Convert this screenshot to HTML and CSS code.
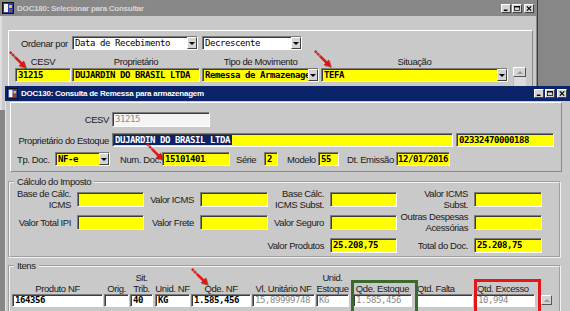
FILE: index.html
```html
<!DOCTYPE html>
<html lang="pt-BR">
  <head>
    <meta charset="UTF-8" />
    <title>DOC130: Consulta de Remessa para armazenagem</title>
    <link rel="stylesheet" href="styles.css">
  </head>
  <body>
    <!-- Janela de trás: DOC180 -->
    <div class="win win-back">
      <div class="titlebar inactive">
        <svg class="app-ico" width="12" height="12" viewBox="0 0 12 12"><rect x="0.5" y="0.5" width="11" height="11" fill="#2c3f9c" stroke="#111"/><rect x="2" y="2" width="4" height="8" fill="#f2f2f2"/><rect x="7" y="3" width="3" height="3" fill="#e8c020"/><rect x="7" y="7" width="3" height="3" fill="#d03030"/></svg>
        <span class="title">DOC180: Selecionar para Consultar</span>
        <div class="tb-btns">
          <span class="tb-btn"><svg width="8" height="7" viewBox="0 0 8 7"><rect x="1" y="5" width="5" height="2" fill="#000"/></svg></span>
          <span class="tb-btn"><svg width="8" height="7" viewBox="0 0 8 7"><rect x="0.5" y="0.5" width="7" height="6" fill="none" stroke="#000"/><rect x="0" y="0" width="8" height="2" fill="#000"/></svg></span>
          <span class="tb-btn close"><svg width="8" height="7" viewBox="0 0 8 7"><path d="M1 0.5 L7 6.5 M7 0.5 L1 6.5" stroke="#000" stroke-width="1.6"/></svg></span>
        </div>
      </div>

      <div class="panel back-panel">
        <div class="order-row">
          <span class="lbl order-lbl">Ordenar por</span>
          <div class="fld wht combo w126"><span class="val thin">Data de Recebimento</span><i class="drop"></i></div>
          <div class="fld wht combo w100 ml4"><span class="val thin">Decrescente</span><i class="drop"></i></div>
        </div>
        <div class="filter-row">
          <div class="fcol w56"><span class="hdr">CESV</span><div class="fld yel">31215</div></div>
          <div class="fcol w128 ml1"><span class="hdr">Proprietário</span><div class="fld yel">DUJARDIN DO BRASIL LTDA</div></div>
          <div class="fcol w117 ml2"><span class="hdr">Tipo de Movimento</span><div class="fld yel combo"><span class="val">Remessa de Armazenagem</span><i class="drop"></i></div></div>
          <div class="fcol w187 ml2"><span class="hdr">Situação</span><div class="fld yel combo"><span class="val">TEFA</span><i class="drop"></i></div></div>
          <div class="fcol scroll-col">
            <span class="sc-btn"><i class="up"></i></span>
            <span class="sc-track"></span>
          </div>
        </div>
      </div>
    </div>

    <!-- Janela da frente: DOC130 -->
    <div class="win win-front">
      <div class="titlebar active">
        <svg class="app-ico" width="11" height="11" viewBox="0 0 12 12"><rect x="0.5" y="0.5" width="11" height="11" fill="#2c3f9c" stroke="#111"/><rect x="2" y="2" width="4" height="8" fill="#f2f2f2"/><rect x="7" y="3" width="3" height="3" fill="#e8c020"/><rect x="7" y="7" width="3" height="3" fill="#d03030"/></svg>
        <span class="title">DOC130: Consulta de Remessa para armazenagem</span>
        <div class="tb-btns">
          <span class="tb-btn"><svg width="8" height="7" viewBox="0 0 8 7"><rect x="1" y="5" width="5" height="2" fill="#000"/></svg></span>
          <span class="tb-btn"><svg width="8" height="7" viewBox="0 0 8 7"><rect x="0.5" y="0.5" width="7" height="6" fill="none" stroke="#000"/><rect x="0" y="0" width="8" height="2" fill="#000"/></svg></span>
          <span class="tb-btn close"><svg width="8" height="7" viewBox="0 0 8 7"><path d="M1 0.5 L7 6.5 M7 0.5 L1 6.5" stroke="#000" stroke-width="1.6"/></svg></span>
        </div>
      </div>

      <div class="panel head-panel">
        <div class="hp-row r1">
          <span class="lbl rlbl">CESV</span>
          <div class="fld off w98 h15">31215</div>
        </div>
        <div class="hp-row r2">
          <span class="lbl rlbl">Proprietário do Estoque</span>
          <div class="fld yel w341"><span class="sel">DUJARDIN DO BRASIL LTDA</span></div>
          <div class="fld yel w98 ml3">02332470000188</div>
        </div>
        <div class="hp-row r3">
          <span class="lbl l-tp">Tp. Doc.</span>
          <div class="fld yel combo w55"><span class="val">NF-e</span><i class="drop"></i></div>
          <span class="lbl l-num">Num. Doc.</span>
          <div class="fld yel w68">15101401</div>
          <span class="lbl l-serie">Série</span>
          <div class="fld yel w14">2</div>
          <span class="lbl l-modelo">Modelo</span>
          <div class="fld yel w21">55</div>
          <span class="lbl l-dt">Dt. Emissão</span>
          <div class="fld yel w54 tight">12/01/2016</div>
        </div>
      </div>

      <fieldset class="group calc">
        <legend>Cálculo do Imposto</legend>
        <div class="calc-grid">
          <span class="lbl">Base de Cálc.<br>ICMS</span>
          <div class="fld yel"></div>
          <span class="lbl">Valor ICMS</span>
          <div class="fld yel"></div>
          <span class="lbl">Base Cálc.<br>ICMS Subst.</span>
          <div class="fld yel"></div>
          <span class="lbl">Valor ICMS<br>Subst.</span>
          <div class="fld yel"></div>

          <span class="lbl">Valor Total IPI</span>
          <div class="fld yel"></div>
          <span class="lbl">Valor Frete</span>
          <div class="fld yel"></div>
          <span class="lbl">Valor Seguro</span>
          <div class="fld yel"></div>
          <span class="lbl">Outras Despesas<br>Acessórias</span>
          <div class="fld yel"></div>

          <span class="lbl c45">Valor Produtos</span>
          <div class="fld yel">25.208,75</div>
          <span class="lbl">Total do Doc.</span>
          <div class="fld yel">25.208,75</div>
        </div>
      </fieldset>

      <fieldset class="group itens">
        <legend>Itens</legend>
        <div class="items">
          <div class="icol w91"><span class="hdr">Produto NF</span><div class="fld">164356</div></div>
          <div class="icol w25 ml1"><span class="hdr">Orig.</span><div class="fld"></div></div>
          <div class="icol w23 ml1"><span class="hdr">Sit.<br>Trib.</span><div class="fld">40</div></div>
          <div class="icol w35 ml2"><span class="hdr">Unid. NF</span><div class="fld">KG</div></div>
          <div class="icol w60 ml1"><span class="hdr">Qde. NF</span><div class="fld">1.585,456</div></div>
          <div class="icol w63 ml1"><span class="hdr">Vl. Unitário NF</span><div class="fld dim">15,89999748</div></div>
          <div class="icol w33 ml1"><span class="hdr">Unid.<br>Estoque</span><div class="fld dim">KG</div></div>
          <div class="icol w59 ml4"><span class="hdr">Qde. Estoque</span><div class="fld dim">1.585,456</div></div>
          <div class="icol w58 ml3"><span class="hdr left">Qtd. Falta</span><div class="fld"></div></div>
          <div class="icol w60 ml2"><span class="hdr left">Qtd. Excesso</span><div class="fld dim">10,994</div></div>
          <div class="icol sc-item"><span class="sc-btn"><i class="up"></i></span></div>
        </div>
      </fieldset>
    </div>

    <!-- Marcações da captura (sobrepostas) -->
    <div class="mark mark-green"></div>
    <div class="mark mark-red"></div>
    <svg class="arrow ar-cesv" width="18" height="18" viewBox="0 0 20 20"><path d="M1 1 L7 7" stroke="#e41414" stroke-width="2.6" stroke-dasharray="2.2 1.6"/><path d="M7 7 L14 14" stroke="#e41414" stroke-width="2.6"/><polygon points="19,19 10.6,16.6 16.6,10.6" fill="#e41414"/></svg>
    <svg class="arrow ar-tefa" width="18" height="18" viewBox="0 0 20 20"><path d="M1 1 L7 7" stroke="#e41414" stroke-width="2.6" stroke-dasharray="2.2 1.6"/><path d="M7 7 L14 14" stroke="#e41414" stroke-width="2.6"/><polygon points="19,19 10.6,16.6 16.6,10.6" fill="#e41414"/></svg>
    <svg class="arrow ar-num" width="18" height="18" viewBox="0 0 20 20"><path d="M1 1 L7 7" stroke="#e41414" stroke-width="2.6" stroke-dasharray="2.2 1.6"/><path d="M7 7 L14 14" stroke="#e41414" stroke-width="2.6"/><polygon points="19,19 10.6,16.6 16.6,10.6" fill="#e41414"/></svg>
    <svg class="arrow ar-qde" width="18" height="18" viewBox="0 0 20 20"><path d="M1 1 L7 7" stroke="#e41414" stroke-width="2.6" stroke-dasharray="2.2 1.6"/><path d="M7 7 L14 14" stroke="#e41414" stroke-width="2.6"/><polygon points="19,19 10.6,16.6 16.6,10.6" fill="#e41414"/></svg>
  </body>
</html>
```

FILE: styles.css
```css
* {
  margin: 0;
  box-sizing: border-box;
}

body {
  position: relative;
  width: 570px;
  height: 311px;
  overflow: hidden;
  background: #878787;
  font-family: "Liberation Sans", Arial, sans-serif;
  font-size: 9.5px;
  letter-spacing: -0.4px;
  color: #1a1a1a;
}

/* Windows on the desktop */
.win {
  position: absolute;
  background: #c9c9c9;
  overflow: hidden;
}

.win-back {
  left: 0;
  top: 0;
  width: 538px;
  height: 110px;
  border-right: 1px solid #3c3c3c;
  box-shadow: inset -1px 0 0 #8a8a8a, inset 2px 0 0 #dedede;
}

.win-front {
  left: 5px;
  top: 86px;
  width: 565px;
  height: 225px;
  box-shadow: inset 1px 0 0 #e6e6e6;
}

/* Title bars */
.titlebar {
  display: flex;
  align-items: center;
  gap: 3px;
  padding-left: 2px;
}

.titlebar.inactive {
  height: 16px;
  background: #888888;
  color: #d6d6d6;
  padding-right: 3px;
}

.titlebar.active {
  height: 15px;
  background: #0b2469;
  color: #fff;
  padding-right: 3px;
}

.title {
  font-size: 8px;
  font-weight: bold;
  letter-spacing: -0.25px;
}

.tb-btns {
  display: flex;
  gap: 1px;
  margin-left: auto;
}

.tb-btn {
  width: 10px;
  height: 9px;
  display: flex;
  align-items: center;
  justify-content: center;
  background: #d4d4d4;
  border: 1px solid;
  border-color: #fff #404040 #404040 #fff;
}

.tb-btn svg {
  width: 6px;
  height: 5px;
}

.tb-btn.close {
  margin-left: 1px;
}

/* Panels */
.panel {
  border-top: 1px solid #fff;
  border-left: 1px solid #fff;
}

.back-panel {
  margin: 14px 0 0 8px;
  width: 525px;
  height: 100px;
  border-right: 1px solid #8a8a8a;
}

.head-panel {
  margin: 1px 0 0 5px;
  width: 552px;
  height: 70px;
  border-right: 1px solid #8a8a8a;
  border-bottom: 1px solid #8a8a8a;
}

/* Fields */
.fld {
  height: 14px;
  border: 1px solid;
  border-color: #7c7c7c #fff #fff #7c7c7c;
  box-shadow: inset 1px 1px 0 #3c3c3c;
  padding: 0 0 0 2px;
  font-family: "DejaVu Sans Mono", "Liberation Mono", monospace;
  font-weight: bold;
  font-size: 9px;
  letter-spacing: -0.42px;
  line-height: 12px;
  color: #000;
  white-space: nowrap;
  overflow: hidden;
}

.fld.tight { padding-left: 1px; }

.yel { background: #ffff00; }
.wht { background: #fff; }

.off {
  background: #f4f4f4;
  color: #8a8a8a;
  font-weight: normal;
}

.thin { font-weight: normal; }

.dim {
  color: #8a8a8a;
  font-weight: normal;
}

.combo {
  display: flex;
  padding-right: 0;
}

.combo .val {
  flex: 1;
  overflow: hidden;
}

.drop {
  flex: none;
  width: 10px;
  height: 12px;
  background: #d4d4d4;
  border: 1px solid;
  border-color: #fff #404040 #404040 #fff;
  display: flex;
  align-items: center;
  justify-content: center;
}

.drop::after {
  content: "";
  border-left: 3px solid transparent;
  border-right: 3px solid transparent;
  border-top: 3px solid #000;
}

.sel {
  background: #0b2469;
  color: #fff;
  padding: 0 2px 0 1px;
  margin-left: -1px;
}

/* Back window rows */
.order-row {
  display: flex;
  align-items: center;
  margin-top: 5px;
  padding-left: 12px;
}

.order-lbl { width: 51px; }

.filter-row {
  display: flex;
  margin-top: 6px;
  padding-left: 6px;
}

.fcol {
  display: flex;
  flex-direction: column;
}

.fcol .hdr {
  height: 12px;
  line-height: 12px;
  text-align: center;
}

.scroll-col {
  margin-left: 5px;
  width: 13px;
  padding-top: 11px;
}

.sc-btn {
  width: 13px;
  height: 10px;
  display: flex;
  align-items: center;
  justify-content: center;
  background: #d4d4d4;
  border: 1px solid;
  border-color: #fff #555 #555 #fff;
}

.sc-btn .up {
  border-left: 3px solid transparent;
  border-right: 3px solid transparent;
  border-bottom: 3px solid #9a9a9a;
}

.sc-track {
  height: 10px;
  background: #dcdcdc;
  border-left: 1px solid #bdbdbd;
}

/* Front window header rows */
.hp-row {
  display: flex;
  align-items: center;
}

.r1 { margin-top: 9px; }
.r2 { margin-top: 6px; }
.r3 { margin-top: 5px; padding-left: 6px; }

.rlbl {
  width: 101px;
  text-align: right;
  padding-right: 3px;
}

.h15 { height: 15px; line-height: 13px; }

.l-tp { width: 38px; }
.l-num { width: 42px; margin-left: 10px; }
.l-serie { width: 28px; margin-left: 6px; }
.l-modelo { width: 31px; margin-left: 9px; }
.l-dt { width: 49px; margin-left: 8px; }

/* Group boxes */
.group {
  width: 553px;
  margin-left: 3px;
  padding: 0;
  border: 2px groove #f2f2f2;
  min-inline-size: 0;
}

.group legend {
  margin-left: 4px;
  padding: 0 3px;
  line-height: 11px;
}

.calc { margin-top: 4px; }

.calc-grid {
  display: grid;
  grid-template-columns: 65px 67px 56px 68px 62px 67px 77px 68px;
  grid-auto-rows: 22px;
  row-gap: 1px;
  align-items: center;
  padding: 1px 0 0 2px;
}

.calc-grid .lbl {
  text-align: right;
  padding-right: 6px;
  line-height: 11px;
}

.calc-grid .fld { height: 15px; }

.c45 { grid-column: 4 / span 2; }

.itens {
  margin-top: 2px;
  height: 60px;
}

.items {
  display: flex;
  padding-left: 2px;
}

.icol {
  display: flex;
  flex-direction: column;
}

.icol .hdr {
  height: 23px;
  display: flex;
  align-items: flex-end;
  justify-content: center;
  text-align: center;
  line-height: 11px;
}

.icol .hdr.left {
  justify-content: flex-start;
  padding-left: 2px;
}

.icol .fld {
  height: 13px;
  line-height: 11px;
  background: #fff;
}

.sc-item {
  margin-left: 6px;
  padding-top: 24px;
}

.sc-item .sc-btn {
  width: 11px;
}

/* Widths and spacing helpers */
.w14 { width: 14px; }
.w21 { width: 21px; }
.w23 { width: 23px; }
.w25 { width: 25px; }
.w33 { width: 33px; }
.w35 { width: 35px; }
.w54 { width: 54px; }
.w55 { width: 55px; }
.w56 { width: 56px; }
.w58 { width: 58px; }
.w59 { width: 59px; }
.w60 { width: 60px; }
.w63 { width: 63px; }
.w68 { width: 68px; }
.w91 { width: 91px; }
.w98 { width: 98px; }
.w100 { width: 100px; }
.w117 { width: 117px; }
.w126 { width: 126px; }
.w128 { width: 128px; }
.w187 { width: 187px; }
.w341 { width: 341px; }

.ml1 { margin-left: 1px; }
.ml2 { margin-left: 2px; }
.ml3 { margin-left: 3px; }
.ml4 { margin-left: 4px; }

/* Annotation overlays */
.mark {
  position: absolute;
  border: 3px solid;
  border-bottom: 0;
  width: 67px;
}

.mark-green {
  left: 351px;
  top: 280px;
  height: 31px;
  border-color: #3b6b2c;
}

.mark-red {
  left: 474px;
  top: 279px;
  height: 32px;
  border-color: #e3161b;
}

.arrow {
  position: absolute;
  filter: drop-shadow(1px 1px 0 rgba(0, 0, 0, 0.35));
}

.ar-cesv { left: 9px; top: 51px; }
.ar-tefa { left: 314px; top: 50px; }
.ar-num { left: 146px; top: 143px; }
.ar-qde { left: 191px; top: 268px; }
```
